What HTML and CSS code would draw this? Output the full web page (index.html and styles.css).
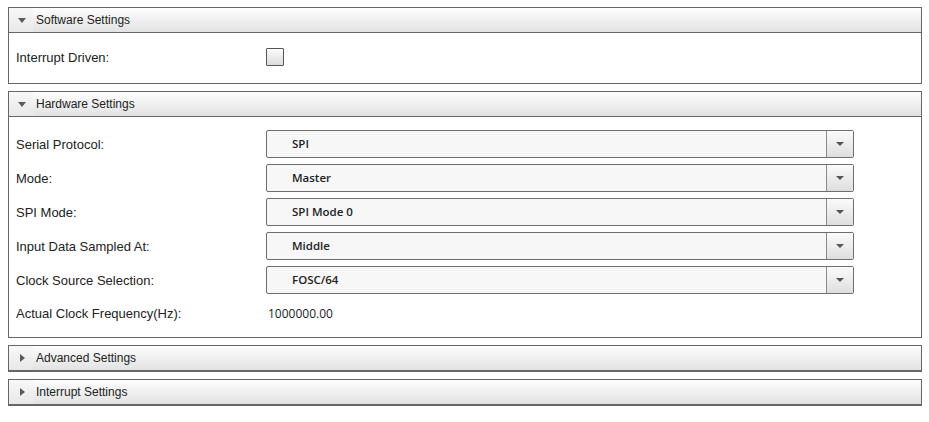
FILE: index.html
```html
<!DOCTYPE html>
<html>
<head>
<meta charset="utf-8">
<link rel="stylesheet" href="styles.css">
</head>
<body>
<div class="accordion">
  <section class="panel">
    <div class="panel-header"><span class="icon-box"><span class="tri-down"></span></span><span class="title">Software Settings</span></div>
    <div class="panel-body sw-body">
      <div class="row check-row">
        <span class="label">Interrupt Driven:</span>
        <span class="checkbox"></span>
      </div>
    </div>
  </section>
  <section class="panel">
    <div class="panel-header"><span class="icon-box"><span class="tri-down"></span></span><span class="title">Hardware Settings</span></div>
    <div class="panel-body hw-body">
      <div class="row select-row"><span class="label">Serial Protocol:</span><div class="select"><span class="select-text">SPI</span><span class="select-btn"><span class="btn-tri"></span></span></div></div>
      <div class="row select-row"><span class="label">Mode:</span><div class="select"><span class="select-text">Master</span><span class="select-btn"><span class="btn-tri"></span></span></div></div>
      <div class="row select-row"><span class="label">SPI Mode:</span><div class="select"><span class="select-text">SPI Mode 0</span><span class="select-btn"><span class="btn-tri"></span></span></div></div>
      <div class="row select-row"><span class="label">Input Data Sampled At:</span><div class="select"><span class="select-text">Middle</span><span class="select-btn"><span class="btn-tri"></span></span></div></div>
      <div class="row select-row"><span class="label">Clock Source Selection:</span><div class="select"><span class="select-text">FOSC/64</span><span class="select-btn"><span class="btn-tri"></span></span></div></div>
      <div class="row value-row"><span class="label">Actual Clock Frequency(Hz):</span><span class="value">1000000.00</span></div>
    </div>
  </section>
  <section class="panel collapsed">
    <div class="panel-header"><span class="icon-box"><span class="tri-right"></span></span><span class="title">Advanced Settings</span></div>
  </section>
  <section class="panel collapsed">
    <div class="panel-header"><span class="icon-box"><span class="tri-right"></span></span><span class="title">Interrupt Settings</span></div>
  </section>
</div>
</body>
</html>
```

FILE: styles.css
```css
html, body {
  background: #ffffff;
}
body {
  margin: 7px 7px 0 8px;
  font-family: "Liberation Sans", Arial, sans-serif;
  color: #222222;
}
.accordion {
  display: flex;
  flex-direction: column;
  gap: 7px;
}
.panel {
  border: 1px solid #666666;
  background: #ffffff;
}
.panel.collapsed {
  border-bottom-width: 2px;
}
.panel-header {
  height: 24px;
  display: flex;
  align-items: center;
  background: linear-gradient(#fdfdfd, #e2e2e2);
  font-size: 12px;
  color: #222222;
}
.panel:not(.collapsed) .panel-header {
  border-bottom: 1px solid #666666;
}
.icon-box {
  width: 24px;
  height: 24px;
  display: flex;
  align-items: center;
  justify-content: center;
  background: linear-gradient(#f8f8f8, #e8e8e8);
  margin-right: 3px;
}
.tri-down {
  width: 0;
  height: 0;
  border-left: 4px solid transparent;
  border-right: 4px solid transparent;
  border-top: 5px solid #5a5a5a;
  margin-left: 2px;
}
.tri-right {
  width: 0;
  height: 0;
  border-top: 4px solid transparent;
  border-bottom: 4px solid transparent;
  border-left: 5px solid #5a5a5a;
  margin-left: 2px;
}
.title {
  line-height: 24px;
}
.panel-body {
  padding-left: 7px;
  padding-right: 7px;
  font-size: 13px;
}
.sw-body {
  padding-top: 15px;
  padding-bottom: 17px;
}
.hw-body {
  padding-top: 13px;
  padding-bottom: 11px;
  display: flex;
  flex-direction: column;
  gap: 6px;
}
.row {
  display: grid;
  grid-template-columns: 250px auto;
  align-items: center;
}
.check-row {
  height: 18px;
}
.label {
  color: #222222;
}
.checkbox {
  width: 18px;
  height: 18px;
  box-sizing: border-box;
  border: 1px solid #555555;
  border-radius: 1px;
  background: linear-gradient(#fbfbfb, #dcdcdc);
}
.select-row {
  height: 28px;
}
.select {
  width: 588px;
  height: 28px;
  box-sizing: border-box;
  border: 1px solid #6e6e6e;
  border-radius: 2px;
  background: #f7f7f7;
  display: flex;
  align-items: stretch;
}
.select-text {
  flex: 1;
  padding-left: 25px;
  font-family: "Open Sans", sans-serif;
  font-weight: 600;
  font-size: 11.5px;
  line-height: 26px;
  color: #222222;
}
.select-btn {
  width: 26px;
  border-left: 1px solid #8a8a8a;
  background: linear-gradient(#fbfbfb, #dedede);
  display: flex;
  align-items: center;
  justify-content: center;
}
.btn-tri {
  width: 0;
  height: 0;
  border-left: 4px solid transparent;
  border-right: 4px solid transparent;
  border-top: 4px solid #555555;
}
.value-row {
  height: 26px;
}
.value {
  padding-left: 2px;
  font-family: "Open Sans", sans-serif;
  font-size: 12px;
  color: #222222;
}
```
